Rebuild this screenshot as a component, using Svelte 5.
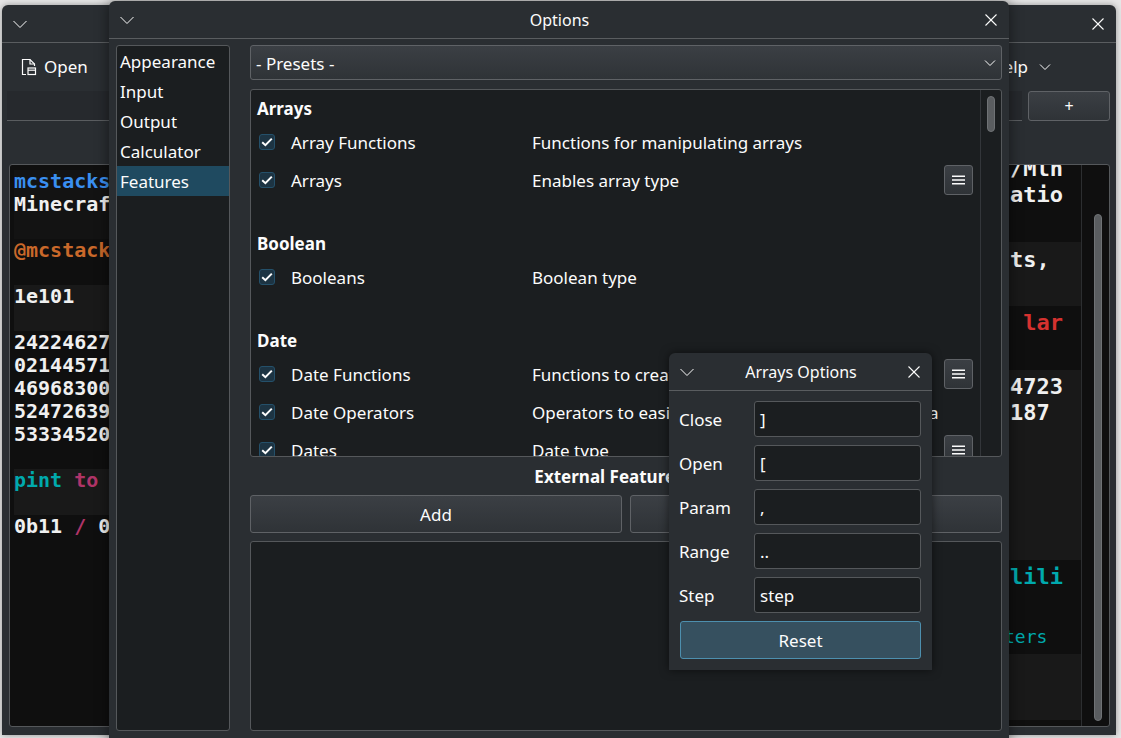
<script>
	const sections = [
		{
			title: 'Arrays',
			rows: [
				{ name: 'Array Functions', desc: 'Functions for manipulating arrays' },
				{ name: 'Arrays', desc: 'Enables array type', menu: true }
			]
		},
		{
			title: 'Boolean',
			rows: [{ name: 'Booleans', desc: 'Boolean type' }]
		},
		{
			title: 'Date',
			rows: [
				{ name: 'Date Functions', desc: 'Functions to create and manipulate dates', menu: true },
				{ name: 'Date Operators', desc: 'Operators to easily manipulate date and time delta' },
				{ name: 'Dates', desc: 'Date type', menu: true }
			]
		}
	];

	const pages = ['Appearance', 'Input', 'Output', 'Calculator', 'Features'];

	const fields = [
		{ label: 'Close', value: ']' },
		{ label: 'Open', value: '[' },
		{ label: 'Param', value: ',' },
		{ label: 'Range', value: '..' },
		{ label: 'Step', value: 'step' }
	];
</script>

{#snippet chevron()}
	<svg class="chev" width="16" height="16" viewBox="0 0 16 16">
		<polyline points="1.5,5 8,11.5 14.5,5" fill="none" stroke="#fcfcfc" stroke-width="1" />
	</svg>
{/snippet}

{#snippet close()}
	<svg class="close" width="14" height="14" viewBox="0 0 14 14">
		<line x1="1.5" y1="1.5" x2="12.5" y2="12.5" stroke="#fcfcfc" stroke-width="1.1" />
		<line x1="12.5" y1="1.5" x2="1.5" y2="12.5" stroke="#fcfcfc" stroke-width="1.1" />
	</svg>
{/snippet}

{#snippet menuIcon()}
	<svg width="13" height="10" viewBox="0 0 13 10">
		<path d="M0 0.5h13v1.6H0zM0 4.2h13v1.6H0zM0 7.9h13v1.6H0z" fill="#fcfcfc" />
	</svg>
{/snippet}

<div class="desktop">
	<!-- main window, behind -->
	<section class="window main">
		<header class="titlebar">
			{@render chevron()}
			<span class="title"></span>
			{@render close()}
		</header>
		<div class="toolbar">
			<div class="tool">
				<svg width="16" height="18" viewBox="0 0 16 18" fill="none" stroke="#fcfcfc" stroke-width="1.2">
					<path d="M5 16.5H1.5V1.5H9L13.5 6V8" />
					<path d="M9 1.5V6H13.5" />
					<rect x="7" y="10" width="7.5" height="6.5" />
					<path d="M7 12.2H14.5" />
				</svg>
				<span>Open</span>
			</div>
			<div class="tool help">
				<span>Help</span>
				<svg width="12" height="12" viewBox="0 0 12 12">
					<polyline points="1,3.5 6,8.5 11,3.5" fill="none" stroke="#fcfcfc" stroke-width="1" />
				</svg>
			</div>
		</div>
		<div class="tabs">
			<div class="tabstrip"></div>
			<button class="btn plus">+</button>
		</div>
		<div class="editor">
			<div class="pane left">
				<div class="block top">
					<div class="blue">mcstacks</div>
					<div>Minecraft</div>
					<div>&nbsp;</div>
				</div>
				<div class="orange">@mcstacks</div>
				<div>&nbsp;</div>
				<div class="block band">
					<div>1e101</div>
					<div>&nbsp;</div>
				</div>
				<div>24224627</div>
				<div>02144571</div>
				<div>46968300</div>
				<div>52472639</div>
				<div>53334520</div>
				<div>&nbsp;</div>
				<div class="block band">
					<div><span class="teal">pint</span> <span class="pink">to</span></div>
					<div>&nbsp;</div>
				</div>
				<div>0b11 <span class="pink">/</span> 0b11</div>
			</div>
			<div class="pane right">
				<div class="r-line">/Mln</div>
				<div class="r-line">atio</div>
				<div class="r-band b1">ts,</div>
				<div class="r-line lar">&nbsp;<span class="red">lar</span></div>
				<div class="r-band b2">
					<div>4723</div>
					<div>187</div>
				</div>
				<div class="r-line lili teal">lili</div>
				<div class="r-line ters teal">ters</div>
				<div class="r-band b3"></div>
			</div>
			<div class="gutter">
				<div class="thumb big"></div>
			</div>
		</div>
	</section>

	<!-- options dialog -->
	<section class="window options">
		<header class="titlebar">
			{@render chevron()}
			<span class="title">Options</span>
			{@render close()}
		</header>
		<div class="options-body">
			<nav class="pages">
				{#each pages as page}
					<div class="page" class:active={page === 'Features'}>{page}</div>
				{/each}
			</nav>
			<div class="content">
				<div class="combo">
					<span>- Presets -</span>
					<svg width="12" height="12" viewBox="0 0 12 12">
						<polyline points="1,3.5 6,8.5 11,3.5" fill="none" stroke="#fcfcfc" stroke-width="1" />
					</svg>
				</div>
				<div class="list">
					<div class="list-scroll">
						{#each sections as section}
							<div class="section">
								<h3>{section.title}</h3>
								{#each section.rows as row}
									<div class="row">
										<span class="check">
											<svg width="12" height="10" viewBox="0 0 12 10">
												<polyline points="1.2,5.2 4.4,8.2 10.8,1.6" fill="none" stroke="#fcfcfc" stroke-width="2" />
											</svg>
										</span>
										<span class="name">{row.name}</span>
										<span class="desc">{row.desc}</span>
										{#if row.menu}
											<button class="btn menu">{@render menuIcon()}</button>
										{/if}
									</div>
								{/each}
							</div>
						{/each}
					</div>
					<div class="list-gutter">
						<div class="thumb"></div>
					</div>
				</div>
				<div class="ext-title">External Feature Files</div>
				<div class="ext-buttons">
					<button class="btn wide">Add</button>
					<button class="btn wide">Remove</button>
				</div>
				<div class="ext-list"></div>
			</div>
		</div>
	</section>

	<!-- feature popup -->
	<section class="window popup">
		<header class="titlebar">
			{@render chevron()}
			<span class="title">Arrays Options</span>
			{@render close()}
		</header>
		<div class="form">
			{#each fields as field}
				<label class="field">
					<span>{field.label}</span>
					<span class="input">{field.value}</span>
				</label>
			{/each}
			<button class="btn reset">Reset</button>
		</div>
	</section>
</div>

<style>
	:global(body) {
		margin: 0;
		background: #e6e6e6;
	}

	.desktop {
		position: relative;
		width: 1121px;
		height: 738px;
		overflow: hidden;
		background: #e6e6e6;
		font-family: 'Noto Sans', sans-serif;
		font-size: 17px;
		color: #fcfcfc;
	}

	.window {
		position: absolute;
		display: flex;
		flex-direction: column;
		box-sizing: border-box;
		background: #2a2e32;
		border-radius: 6px 6px 0 0;
		box-shadow: 0 0 6px rgba(0, 0, 0, 0.35);
	}

	.main {
		left: 2px;
		top: 5px;
		width: 1114px;
		height: 730px;
	}

	.options {
		left: 109px;
		top: 1px;
		width: 900px;
		height: 745px;
		box-shadow: 0 0 14px rgba(0, 0, 0, 0.5);
	}

	.popup {
		left: 669px;
		top: 353px;
		width: 263px;
		height: 317px;
		box-shadow: 0 0 10px rgba(0, 0, 0, 0.55);
	}

	.titlebar {
		flex: none;
		display: flex;
		align-items: center;
		justify-content: space-between;
		box-sizing: border-box;
		height: 38px;
		padding: 0 11px 0 10px;
		border-bottom: 1px solid #5a5d60;
		font-size: 16px;
	}

	.title {
		flex: 1;
		text-align: center;
	}

	.chev {
		margin-top: 1px;
	}

	.toolbar {
		flex: none;
		display: flex;
		justify-content: space-between;
		align-items: center;
		height: 47px;
		padding: 0 65px 0 19px;
	}

	.tool {
		display: flex;
		align-items: center;
		gap: 7px;
	}

	.help {
		gap: 11px;
	}

	.tabs {
		flex: none;
		display: flex;
		gap: 6px;
		height: 31px;
		padding: 1px 6px 0 5px;
		box-sizing: border-box;
	}

	.tabstrip {
		flex: 1;
		background: #26292d;
		border-bottom: 1px solid #5a5d60;
	}

	.btn {
		box-sizing: border-box;
		display: flex;
		align-items: center;
		justify-content: center;
		padding: 0;
		font: inherit;
		color: #fcfcfc;
		background: linear-gradient(#3b3f44, #2f3337);
		border: 1px solid #5f6266;
		border-radius: 3px;
	}

	.plus {
		width: 82px;
		height: 30px;
		font-size: 16px;
	}

	.editor {
		position: relative;
		display: flex;
		box-sizing: border-box;
		height: 563px;
		margin: 43px 6px 0 7px;
		background: #0f0f0f;
		border: 1px solid #55585b;
		border-radius: 3px;
		overflow: hidden;
		font-family: 'DejaVu Sans Mono', monospace;
		font-weight: 700;
		font-size: 20px;
		line-height: 23px;
		color: #f0f0f0;
	}

	.pane {
		white-space: nowrap;
		overflow: hidden;
	}

	.left {
		flex: 1;
		padding: 5px 0 0 4px;
	}

	.block.top {
		background: #131313;
	}

	.block.band {
		background: #191919;
	}

	.blue {
		color: #3a8ff0;
	}

	.orange {
		color: #c9682a;
	}

	.teal {
		color: #00a9ad;
	}

	.pink {
		color: #b03468;
	}

	.red {
		color: #d6322f;
	}

	.right {
		flex: none;
		width: 71px;
		padding-left: 7px;
		margin-top: -9px;
		font-size: 22px;
		line-height: 26px;
	}

	.r-line {
		height: 26px;
	}

	.r-band {
		background: #191919;
		margin-left: -7px;
		padding-left: 7px;
	}

	.b1 {
		height: 64px;
		margin-top: 34px;
		box-sizing: border-box;
		padding-top: 5px;
	}

	.lar {
		margin-top: 4px;
	}

	.b2 {
		height: 190px;
		margin-top: 34px;
		box-sizing: border-box;
		padding-top: 4px;
	}

	.lili {
		margin-top: 4px;
	}

	.ters {
		margin-top: 34px;
		margin-left: -6px;
		font-size: 18px;
		font-weight: 400;
	}

	.b3 {
		height: 66px;
		margin-top: 4px;
	}

	.gutter {
		flex: none;
		width: 28px;
		box-sizing: border-box;
		padding: 49px 7px 5px 12px;
		border-left: 1px solid #2c2e30;
		display: flex;
	}

	.thumb {
		box-sizing: border-box;
		width: 8px;
		height: 36px;
		background: #5a5d60;
		border: 1px solid #6f7275;
		border-radius: 4px;
	}

	.thumb.big {
		height: 507px;
	}

	.options-body {
		flex: 1;
		display: flex;
		gap: 20px;
		padding: 6px 7px 0;
		min-height: 0;
	}

	.pages {
		flex: none;
		box-sizing: border-box;
		width: 114px;
		height: 686px;
		background: #1b1e20;
		border: 1px solid #55585b;
		border-radius: 3px;
	}

	.page {
		height: 30px;
		line-height: 32px;
		padding-left: 3px;
	}

	.page.active {
		background: #1f4a60;
	}

	.content {
		flex: 1;
		display: flex;
		flex-direction: column;
		min-width: 0;
	}

	.combo {
		flex: none;
		box-sizing: border-box;
		display: flex;
		align-items: center;
		justify-content: space-between;
		height: 35px;
		padding: 0 5px 0 5px;
		background: linear-gradient(#3b3f44, #2f3337);
		border: 1px solid #5f6266;
		border-radius: 3px;
	}

	.combo span {
		padding-top: 2px;
	}

	.list {
		flex: none;
		display: flex;
		box-sizing: border-box;
		height: 368px;
		margin-top: 9px;
		background: #1b1e20;
		border: 1px solid #55585b;
		border-radius: 3px;
		overflow: hidden;
	}

	.list-scroll {
		flex: 1;
		min-width: 0;
		padding: 1px 7px 0 6px;
	}

	.list-gutter {
		flex: none;
		width: 21px;
		box-sizing: border-box;
		padding: 6px 0 0 6px;
		border-left: 1px solid #33363a;
	}

	.section {
		margin-bottom: 27px;
	}

	h3 {
		margin: 0;
		height: 32px;
		line-height: 36px;
		font-size: 17px;
		font-weight: 700;
	}

	.row {
		display: flex;
		align-items: center;
		height: 38px;
		padding-left: 2px;
	}

	.check {
		flex: none;
		box-sizing: border-box;
		display: flex;
		align-items: center;
		justify-content: center;
		width: 16px;
		height: 16px;
		background: #1d3443;
		border: 1px solid #24506a;
		border-radius: 3px;
	}

	.name {
		flex: none;
		width: 241px;
		margin-left: 16px;
	}

	.desc {
		flex: 1;
		white-space: nowrap;
	}

	.menu {
		flex: none;
		width: 29px;
		height: 30px;
	}

	.ext-title {
		flex: none;
		height: 38px;
		line-height: 40px;
		text-align: center;
		font-weight: 700;
	}

	.ext-buttons {
		flex: none;
		display: flex;
		gap: 8px;
	}

	.wide {
		flex: 1;
		height: 38px;
	}

	.ext-list {
		flex: none;
		box-sizing: border-box;
		height: 190px;
		margin-top: 8px;
		background: #1b1e20;
		border: 1px solid #55585b;
		border-radius: 3px;
	}

	.form {
		display: flex;
		flex-direction: column;
		gap: 8px;
		padding: 10px 11px 0 10px;
	}

	.field {
		display: flex;
		align-items: center;
		height: 36px;
	}

	.field > span:first-child {
		width: 75px;
	}

	.input {
		flex: 1;
		box-sizing: border-box;
		height: 36px;
		line-height: 36px;
		padding-left: 5px;
		background: #1b1e20;
		border: 1px solid #55585b;
		border-radius: 3px;
	}

	.reset {
		height: 38px;
		margin-left: 1px;
		background: #36505f;
		border-color: #4d8fae;
	}
</style>
